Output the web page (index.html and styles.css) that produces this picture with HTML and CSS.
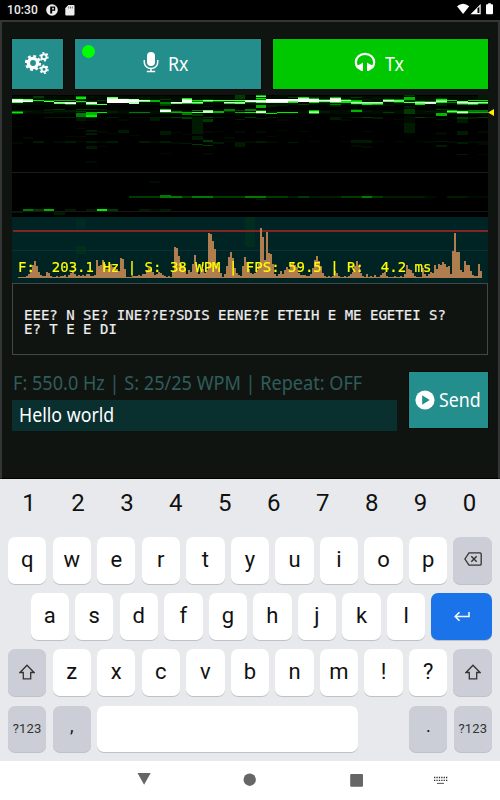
FILE: index.html
```html
<!DOCTYPE html>
<html lang="en">
<head>
    <meta charset="utf-8">
    <title>Morse Decoder</title>
    <meta name="viewport" content="width=device-width, initial-scale=1">
    <link rel="stylesheet" href="styles.css">
</head>
<body>
<header class="status-bar">
    <span class="clock">10:30</span>
    <svg class="status-p" width="12" height="12" viewBox="0 0 12 12">
        <circle cx="6" cy="6" r="5.8" fill="#eee"/>
        <path d="M4.200 2.500h5v4.300h-3v2.700h-2z" fill="#000"/>
        <path d="M6.200 3.800h1.700v1.700H6.200z" fill="#eee"/>
    </svg>
    <svg class="status-sd" width="10" height="11" viewBox="0 0 10 11">
        <path d="M3.300 0H8.500Q9.500 0 9.500 1V9.500Q9.500 10.500 8.500 10.500H1.300Q.3 10.500 .3 9.500V3.200z" fill="#eee"/>
        <path d="M3.700 1.500v2M5.500 1.500v2M7.300 1.500v2" stroke="#555" stroke-width=".8"/>
    </svg>
    <svg class="status-right" width="38" height="12" viewBox="0 0 38 12">
        <path d="M0 3.200Q6 -1.800 12.200 3.200L6.100 11z" fill="#fff"/>
        <path d="M13.500 11.300L23.700 1v10.300z" fill="#fff"/>
        <path d="M20.500 5.500L22.400 3.400V10H20.500z" fill="#000"/>
        <path d="M31.200 1.300V.2h2.600v1.100h1.200q1 0 1 1v8q0 1-1 1h-5q-1 0-1-1v-8q0-1 1-1z" fill="#fff"/>
    </svg>
</header>

<main class="app">
    <div class="toolbar">
        <button class="btn btn-settings">
            <svg width="26" height="24" viewBox="0 0 26 24" fill="none" stroke="#fff">
                <circle cx="9" cy="12" r="4.600" stroke-width="3.400"/>
                <circle cx="9" cy="12" r="6.900" stroke-width="2.400" stroke-dasharray="2.900 2.520"/>
                <circle cx="20" cy="5.700" r="2.500" stroke-width="1.900"/>
                <circle cx="20" cy="5.700" r="4" stroke-width="1.500" stroke-dasharray="1.900 2.290"/>
                <circle cx="20" cy="18.300" r="2.500" stroke-width="1.900"/>
                <circle cx="20" cy="18.300" r="4" stroke-width="1.500" stroke-dasharray="1.900 2.290"/>
            </svg>
        </button>
        <button class="btn btn-rx">
            <i class="led"></i>
            <svg width="16" height="22" viewBox="0 0 16 22">
                <rect x="4" y="1" width="8" height="14" rx="4" fill="#fff"/>
                <path d="M1.300 9v2.500a6.700 6 0 0 0 13.400 0V9M8 17.500V20.500M3.800 20.600h8.400" fill="none" stroke="#fff" stroke-width="1.500"/>
            </svg>
            <span class="label">Rx</span>
        </button>
        <button class="btn btn-tx">
            <svg width="22" height="20" viewBox="0 0 22 20">
                <path d="M4 15.500Q1.800 13.500 1.800 10.300A9.200 8.500 0 0 1 20.200 10.300Q20.200 13.500 18 15.500" fill="none" stroke="#fff" stroke-width="2.200"/>
                <path d="M9 10.500V19H7.300L2.500 15.800V13.800L6.300 12.200zM13 10.500V19h1.700l4.800-3.200v-2l-3.800-1.600z" fill="#fff"/>
            </svg>
            <span class="label">Tx</span>
        </button>
    </div>

    <div class="scope">
        <canvas id="scope" width="476" height="188"></canvas>
        <i class="marker"></i>
        <div class="scope-info">F:&nbsp; 203.1 Hz | S: 38 WPM | FPS: 59.5 | R:&nbsp; 4.2 ms</div>
    </div>

    <div class="decoded">EEE? N SE? INE??E?SDIS EENE?E ETEIH E ME EGETEI S?<br>E? T E E DI</div>

    <div class="sender">
        <div class="sender-left">
            <div class="tx-info"><span class="label">F: 550.0 Hz | S: 25/25 WPM | Repeat: OFF</span></div>
            <div class="message"><span class="label">Hello world</span></div>
        </div>
        <button class="btn btn-send">
            <svg width="20" height="20" viewBox="0 0 20 20">
                <circle cx="10" cy="10" r="9.600" fill="#fff"/>
                <path d="M7.200 5.300L14.700 10L7.200 14.700z" fill="#238e8b"/>
            </svg>
            <span class="label">Send</span>
        </button>
    </div>
</main>

<section class="keyboard">
    <div class="numbers">
        <span>1</span><span>2</span><span>3</span><span>4</span><span>5</span><span>6</span><span>7</span><span>8</span><span>9</span><span>0</span>
    </div>
    <div class="row">
        <b>q</b><b>w</b><b>e</b><b>r</b><b>t</b><b>y</b><b>u</b><b>i</b><b>o</b><b>p</b>
        <b class="dark">
            <svg width="18" height="14" viewBox="0 0 18 14" fill="none" stroke="#333">
                <path d="M5 .8H16Q17.200 .8 17.200 2V12Q17.200 13.200 16 13.200H5L.9 7z" stroke-width="1.300"/>
                <path d="M7.300 4.300l5.400 5.400M12.700 4.300l-5.400 5.400" stroke-width="1.400"/>
            </svg>
        </b>
    </div>
    <div class="row row-home">
        <b>a</b><b>s</b><b>d</b><b>f</b><b>g</b><b>h</b><b>j</b><b>k</b><b>l</b>
        <b class="enter">
            <svg width="16" height="11" viewBox="0 0 16 11" fill="none" stroke="#fff" stroke-width="1.500">
                <path d="M15 1V5.500H1.500M5.500 1.300L1.200 5.500L5.500 9.700"/>
            </svg>
        </b>
    </div>
    <div class="row">
        <b class="dark">
            <svg width="16" height="16" viewBox="0 0 16 16" fill="none" stroke="#333" stroke-width="1.300">
                <path d="M8 1.200L15 8.500H11.700V14.800H4.300V8.500H1z"/>
            </svg>
        </b>
        <b>z</b><b>x</b><b>c</b><b>v</b><b>b</b><b>n</b><b>m</b><b>!</b><b>?</b>
        <b class="dark">
            <svg width="16" height="16" viewBox="0 0 16 16" fill="none" stroke="#333" stroke-width="1.300">
                <path d="M8 1.200L15 8.500H11.700V14.800H4.300V8.500H1z"/>
            </svg>
        </b>
    </div>
    <div class="row">
        <b class="dark mode">?123</b>
        <b class="dark punct">,</b>
        <b class="space"></b>
        <i class="blank"></i>
        <b class="dark punct">.</b>
        <b class="dark mode">?123</b>
    </div>
</section>

<nav class="nav-bar">
    <svg width="500" height="39" viewBox="0 0 500 39" fill="#666">
        <path d="M137.500 12h13.200L144.100 23.800z"/>
        <circle cx="249.700" cy="18.700" r="6.200"/>
        <rect x="350.200" y="13" width="12.800" height="12.700" rx="1"/>
        <path d="M434 16.500h13.500M434 19.400h13.500" stroke="#333" stroke-width="1.300" stroke-dasharray="1.300 1.100"/>
        <path d="M437 22.400h7" stroke="#555" stroke-width="1"/>
    </svg>
</nav>
<script src="scope.js"></script>
</body>
</html>
```

FILE: styles.css
```css
* {
    box-sizing: border-box;
}

html, body {
    margin: 0;
    padding: 0;
}

body {
    width: 500px;
    height: 800px;
    overflow: hidden;
    background: #000;
    font-family: "Noto Sans", sans-serif;
}

.status-bar {
    display: flex;
    align-items: center;
    height: 20px;
    padding-left: 7px;
    color: #eee;
}

.clock {
    width: 39px;
    font: 500 12px Roboto, sans-serif;
    letter-spacing: 0.1px;
}

.status-sd {
    margin-left: 7px;
}

.status-right {
    margin: 0 5px 2px auto;
}

.app {
    height: 459px;
    padding: 17px 10px 0;
    border: 2px solid #333634;
    border-bottom: 1px solid #000;
    background: #101410;
}

.toolbar {
    display: flex;
    gap: 12px;
    height: 50px;
}

.btn {
    display: flex;
    align-items: center;
    justify-content: center;
    padding: 0;
    border: 0;
    background: #238e8b;
    color: #fff;
    font: 19px "Noto Sans", sans-serif;
    outline: 1px solid #080a08;
}

.label {
    display: inline-block;
    transform: scaleX(0.935);
    transform-origin: left center;
}

.btn-settings {
    width: 51px;
    padding: 0 2px 2px 0;
}

.btn-rx {
    position: relative;
    width: 186px;
    padding-right: 4px;
    gap: 9px;
}

.btn-rx svg {
    margin-top: -4px;
}

.led {
    position: absolute;
    left: 7px;
    top: 6px;
    width: 13px;
    height: 13px;
    border-radius: 50%;
    background: #0f0;
}

.btn-tx {
    width: 215px;
    padding-right: 2px;
    gap: 9px;
    background: #00c800;
}

.btn-tx svg {
    margin-top: -4px;
}

.scope {
    position: relative;
    height: 188px;
    margin-top: 6px;
}

.scope canvas {
    display: block;
}

.marker {
    position: absolute;
    left: 476px;
    top: 14px;
    width: 6px;
    height: 7px;
    background: #fe0;
    clip-path: polygon(0 50%, 100% 0, 100% 100%);
}

.scope-info {
    position: absolute;
    left: 6px;
    top: 164px;
    color: #ff0;
    font: 14px/16px "DejaVu Sans Mono", monospace;
    letter-spacing: 0.010px;
    white-space: pre;
    -webkit-text-stroke: 0.200px #ff0;
}

.decoded {
    height: 72px;
    padding: 24px 0 0 11px;
    border: 1px solid #444745;
    color: #eee;
    font: 14px/14.300px "DejaVu Sans Mono", monospace;
    letter-spacing: 0.010px;
    white-space: nowrap;
    -webkit-text-stroke: 0.200px #eee;
}

.sender {
    display: flex;
    justify-content: space-between;
    margin-top: 17px;
}

.sender-left {
    width: 385px;
}

.tx-info {
    height: 28px;
    padding-left: 1px;
    color: #2e5d5c;
    font-size: 19px;
    line-height: 22px;
    white-space: nowrap;
}

.tx-info .label {
    transform: scaleX(0.953);
}

.message {
    height: 31px;
    padding-left: 7px;
    background: #092f2f;
    color: #fff;
    font-size: 19px;
    line-height: 30px;
}

.btn-send {
    width: 79px;
    height: 56px;
    padding-left: 1px;
    gap: 4px;
}

.keyboard {
    height: 282px;
    background: #e8e9ed;
    font-family: Roboto, sans-serif;
    color: #111;
}

.numbers {
    display: flex;
    height: 58px;
    padding: 0 6px 0 4.500px;
    font-size: 24px;
    line-height: 49px;
    text-align: center;
}

.numbers span {
    flex: 1;
}

.row {
    display: flex;
    gap: 6.200px;
    height: 46.500px;
    margin: 0 8px 9.700px;
}

.row-home {
    margin-left: 30.500px;
}

.row b {
    display: flex;
    flex: none;
    align-items: center;
    justify-content: center;
    width: 38.360px;
    padding-bottom: 2px;
    border-radius: 7px;
    background: #fff;
    box-shadow: 0 1px 0 #bfc1c6;
    font-size: 22px;
    font-weight: 400;
}

.row .dark {
    background: #cbced6;
}

.row .enter {
    flex: 1;
    padding: 0;
    background: #1a73e8;
}

.row .mode {
    padding: 0;
    color: #333;
    font-size: 13px;
    letter-spacing: 0.200px;
}

.row .punct {
    padding-bottom: 6px;
    font-size: 18px;
}

.row .space {
    width: 261px;
}

.blank {
    flex: 1;
}

.nav-bar {
    height: 39px;
    background: #fff;
}

.nav-bar svg {
    display: block;
}
```

FILE: scope.js
```javascript
(function () {
    let colors = ['#000', '#000c00', '#001c00', '#003c00', '#007a00', '#00b400', '#00ee00', '#58ff58', '#b8ffb8', '#fff'];

    // one entry per time slice: "top,height,level"
    let slices = [
        '3,1,3 4,1,8 5,2,9 7,1,7 16,1,4 17,1,6 18,1,4 31,1,1 47,2,1 117,1,2',
        '4,1,7 5,1,8 6,1,9 7,1,3 16,1,2 42,2,1 114,2,4',
        '1,2,3 3,1,2 5,1,6 6,1,2 16,1,1 46,2,2 114,2,3',
        '5,1,4 6,1,7 14,2,2 17,1,2 22,1,2 114,2,5',
        '5,1,5 7,1,8 8,1,7 14,1,3 16,1,2 22,1,2 46,2,1 117,3,2',
        '5,1,5 7,1,8 8,1,9 9,1,4 15,2,2 22,1,2 41,1,1 46,2,2 114,2,2',
        '1,1,4 2,2,6 4,1,3 6,1,6 7,1,3 14,1,3 16,1,3 18,4,4 22,4,2 33,1,1 41,1,1 46,1,1',
        '6,1,3 7,1,8 8,1,9 9,1,6 14,1,3 17,3,5 20,2,6 22,1,3 24,2,1 35,2,2 38,2,2 46,2,2 51,3,2 66,2,1 114,2,2',
        '5,1,3 9,1,7 14,2,2 17,1,6 22,1,1 36,2,1 46,2,1 51,1,1 114,2,6',
        '2,1,7 3,1,8 4,4,9 16,2,2 22,1,2 38,1,1 46,2,2 114,2,3',
        '3,1,3 4,4,9 24,2,1 35,3,2',
        '4,1,8 5,2,9 7,2,8 17,1,4 22,1,1 40,1,1 101,2,3',
        '2,1,2 4,1,3 5,1,9 6,1,7 17,1,4 22,1,1 46,2,2 101,2,3 114,2,2',
        '5,2,5 22,1,2 23,3,2 46,2,1 86,2,1 101,2,3 114,2,1',
        '4,1,3 7,2,4 9,2,3 14,1,6 15,2,9 17,1,4 22,1,2 36,4,2 46,2,2 58,1,1 100,3,4 114,2,2',
        '5,1,2 7,1,9 8,1,7 16,1,4 17,1,5 22,1,3 37,1,1 47,2,1 101,2,4',
        '3,1,6 4,1,8 5,3,9 8,1,5 16,1,2 17,1,5 18,2,4 22,2,3 39,1,1 48,1,2 101,2,3',
        '5,1,6 6,1,4 7,1,8 8,1,6 15,1,4 17,1,7 19,2,3 22,17,2 41,4,2 49,1,3 101,2,4',
        '4,1,3 5,1,8 6,1,6 11,1,2 15,1,7 16,1,9 17,1,8 22,1,3 24,3,3 36,2,1 45,2,3 47,1,1 50,1,3 58,2,1 101,2,4',
        '5,1,7 6,1,4 16,2,5 22,1,2 36,1,1 47,2,2 101,2,3',
        '5,1,7 6,1,3 7,1,9 8,1,6 14,2,4 16,1,3 22,1,1 42,2,1 46,1,1 101,2,3',
        '0,4,3 5,1,7 6,1,4 7,1,8 8,1,7 15,1,3 17,1,5 24,1,2 36,2,1 47,2,2 48,4,2 101,2,3',
        '5,1,8 6,1,9 7,1,4 14,2,4 17,1,6 22,1,3 46,2,1 101,2,4',
        '0,1,5 1,1,7 2,1,3 3,1,6 4,1,4 5,1,8 6,1,9 7,1,7 10,3,5 15,1,4 16,1,8 17,1,9 18,1,4 23,1,2 36,2,1 46,2,2 101,2,4 104,1,2',
        '4,3,9 7,1,8 10,2,2 17,1,2 18,1,6 22,1,2 41,1,1 46,2,1 101,2,3',
        '0,2,1 4,3,9 7,1,8 10,1,2 17,1,6 22,1,1 24,2,1 35,1,1 101,2,3',
        '2,1,3 4,2,9 6,1,7 7,1,6 17,1,6 22,1,1 47,1,2 101,2,2',
        '2,1,6 3,1,8 4,3,9 9,1,3 36,1,1 101,2,3',
        '2,1,3 3,1,5 4,3,9 7,1,6 15,1,5 16,1,7 17,1,8 18,1,5 46,1,1 101,2,2',
        '4,1,4 5,1,9 6,1,7 7,1,3 16,2,2 101,2,2',
        '2,1,5 3,1,8 4,3,9 7,1,6 9,1,4 10,2,2 17,1,1 22,3,2 101,2,2',
        '4,1,4 5,1,8 6,2,6 16,2,1 22,1,1 24,2,1 46,1,1 101,2,3',
        '2,1,3 5,1,5 6,1,6 7,1,8 8,1,7 9,1,3 14,1,3 15,2,5 22,1,2 45,3,2 50,2,1 101,2,3',
        '4,1,2 5,1,2 7,1,8 8,1,7 9,1,6 16,1,2 22,1,3 36,1,1 45,3,2 51,2,1 99,1,1 101,2,4',
        '3,1,2 7,1,8 8,1,7 9,1,5 22,2,2 46,1,1 101,2,3',
        '4,1,5 5,1,9 6,1,7 10,1,2 17,1,3 101,2,2',
        '4,1,4 5,1,7 6,1,7 7,1,4 24,1,1 46,1,1 101,2,2',
        '0,1,3 2,3,5 5,1,3 6,1,3 7,1,7 11,2,2 14,5,3 21,7,1 28,10,2 101,2,2',
        '6,1,5 7,1,8 8,1,7 9,1,6 17,1,1 22,1,3 46,1,1 101,2,2',
        '6,1,4 7,1,9 8,1,8 16,1,2 22,1,2 46,2,1 101,2,1',
        '3,1,3 4,1,6 5,1,7 6,1,8 7,1,6 9,2,2 14,1,3 16,1,2 18,3,5 24,1,2 37,3,1 46,1,2 50,2,2',
        '5,1,6 7,1,4 14,1,2 15,1,5 16,1,7 17,1,5 22,1,1 46,2,1 101,2,2',
        '4,1,1 6,1,7 7,1,9 8,1,7 9,1,4 15,1,3 16,1,7 17,1,9 18,1,5 22,2,3 24,4,2 36,4,2 47,2,2 59,1,2 101,2,2',
        '5,1,6 7,1,8 8,1,8 9,1,5 15,2,4 17,1,5 18,1,2 22,2,2 46,2,1 101,2,1',
        '0,4,2 5,1,6 6,1,3 7,1,8 8,1,6 15,2,4 17,1,5 22,1,3 36,2,1 46,4,1 59,1,1 101,2,1'
    ];

    let spectrum = [
        1, 1, 1, 1, 2, 4, 8, 13, 17, 12, 6, 3, 2, 2, 6, 5, 2, 1, 1, 2, 1, 2, 2, 3, 1, 3, 5, 7, 4,
        2, 3, 2, 3, 2, 4, 4, 2, 2, 3, 18, 12, 13, 18, 14, 9, 9, 14, 11, 11, 9, 7, 20, 19, 9, 1, 0, 1, 2,
        2, 2, 3, 2, 4, 4, 8, 10, 9, 6, 3, 4, 6, 5, 3, 2, 1, 2, 1, 6, 31, 30, 22, 14, 12, 10, 4, 8, 6,
        14, 23, 10, 4, 6, 9, 5, 8, 45, 44, 37, 29, 15, 11, 5, 1, 4, 12, 21, 26, 20, 10, 5, 3, 2, 12, 21, 16, 9,
        5, 4, 5, 8, 14, 50, 41, 18, 46, 25, 24, 14, 4, 2, 4, 7, 4, 8, 11, 9, 14, 16, 13, 11, 5, 3, 3, 3, 2,
        2, 4, 10, 18, 22, 17, 12, 5, 2, 1, 2, 1, 2, 7, 5, 2, 1, 1, 2, 1, 2, 4, 6, 12, 17, 12, 5, 2, 1,
        4, 1, 2, 1, 3, 1, 1, 3, 5, 6, 2, 1, 1, 1, 2, 1, 1, 2, 1, 4, 13, 9, 8, 5, 2, 1, 1, 1, 10,
        4, 2, 4, 6, 5, 13, 9, 14, 13, 16, 14, 11, 12, 4, 27, 45, 26, 26, 8, 6, 17, 13, 13, 7, 3, 2, 2, 14, 7
    ];

    let ctx = document.getElementById('scope').getContext('2d');
    let rect = (color, x, y, w, h) => {
        ctx.fillStyle = color;
        ctx.fillRect(x, y, w, h);
    };

    rect('#000', 0, 0, 476, 122);
    slices.forEach((slice, i) => {
        let x = Math.round(i * 10.6);
        let next = Math.round((i + 1) * 10.6);
        // weak background noise
        rect(colors[1], x, 1, next - x, 9);
        rect(colors[1], x, 15, next - x, 4);
        slice.split(' ').forEach((cell) => {
            let [top, height, level] = cell.split(',').map(Number);
            rect(colors[level], x, top, next - x, height);
        });
    });
    rect('#1b1b1b', 0, 77, 476, 1);
    rect('#161616', 0, 116, 476, 1);

    rect('#002323', 0, 122, 476, 66);
    rect('#002b22', 64, 124, 10, 10);
    rect('#00301c', 64, 151, 10, 8);
    rect('#002d20', 233, 122, 10, 30);
    rect('#0b3031', 0, 155, 476, 1);
    rect('#802424', 1, 135, 475, 2);

    spectrum.forEach((h, i) => rect('#b07d4e', 6 + i * 2, 183 - h, 2, h));
    rect('#b07d4e', 6, 182, 463, 1);
})();
```
